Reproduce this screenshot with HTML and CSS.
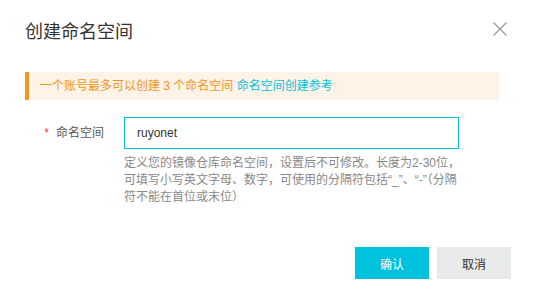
FILE: index.html
```html
<!DOCTYPE html>
<html lang="zh-CN">
<head>
    <meta charset="UTF-8">
    <title>创建命名空间</title>
    <link rel="stylesheet" href="styles.css">
</head>
<body>
    <div class="dialog">
        <div class="dialog-header">
            <h2 class="dialog-title">创建命名空间</h2>
            <span class="dialog-close">
                <svg width="14" height="14" viewBox="0 0 14 14">
                    <path d="M0.5 0.5 L13.5 13.5 M13.5 0.5 L0.5 13.5" stroke="#999" stroke-width="1.2" fill="none"/>
                </svg>
            </span>
        </div>

        <div class="dialog-body">
            <div class="alert">
                一个账号最多可以创建 3 个命名空间 <a href="#" class="alert-link">命名空间创建参考</a>
            </div>

            <div class="form-row">
                <label class="form-label"><span class="required">*</span>命名空间</label>
                <div class="form-control">
                    <input class="input" type="text" value="ruyonet">
                    <p class="help">定义您的镜像仓库命名空间，设置后不可修改。长度为2-30位，可填写小写英文字母、数字，可使用的分隔符包括“_”、“-”（分隔符不能在首位或末位）</p>
                </div>
            </div>
        </div>

        <div class="dialog-footer">
            <button class="btn btn-primary">确认</button>
            <button class="btn btn-normal">取消</button>
        </div>
    </div>
</body>
</html>
```

FILE: styles.css
```css
* {
    margin: 0;
    padding: 0;
    box-sizing: border-box;
}

body {
    font-family: "Liberation Sans", "Noto Sans CJK SC", sans-serif;
    font-size: 12px;
    color: #333;
    background: #fff;
}

.dialog {
    width: 535px;
    height: 301px;
    background: #fff;
}

.dialog-header {
    display: flex;
    align-items: center;
    justify-content: space-between;
    height: 60px;
    padding: 0 28px 0 25px;
}

.dialog-title {
    font-size: 18px;
    font-weight: normal;
    color: #333;
}

.dialog-close {
    display: flex;
    width: 14px;
    height: 14px;
    margin-top: -2px;
    cursor: pointer;
}

.dialog-body {
    padding: 12px 36px 0 25px;
}

.alert {
    height: 28px;
    line-height: 28px;
    padding-left: 11px;
    background: #fdf3e7;
    border-left: 4px solid #f39423;
    color: #f39423;
}

.alert-link {
    color: #00c1de;
    text-decoration: none;
}

.form-row {
    display: flex;
    margin-top: 17px;
}

.form-label {
    width: 99px;
    padding-right: 20px;
    line-height: 32px;
    text-align: right;
    color: #555;
}

.required {
    color: #e54545;
    margin-right: 7px;
}

.form-control {
    width: 335px;
}

.input {
    display: block;
    width: 335px;
    height: 32px;
    padding: 0 12px;
    border: 1px solid #00c1de;
    outline: none;
    font-family: inherit;
    font-size: 12px;
    color: #333;
}

.help {
    width: 340px;
    margin-top: 6px;
    line-height: 17px;
    color: #888;
}

.dialog-footer {
    display: flex;
    justify-content: flex-end;
    gap: 8px;
    padding: 41px 24px 0 0;
}

.btn {
    width: 74px;
    height: 32px;
    border: none;
    font-family: inherit;
    font-size: 12px;
    cursor: pointer;
}

.btn-primary {
    background: #00c1de;
    color: #fff;
}

.btn-normal {
    background: #e9eaea;
    color: #333;
}
```
